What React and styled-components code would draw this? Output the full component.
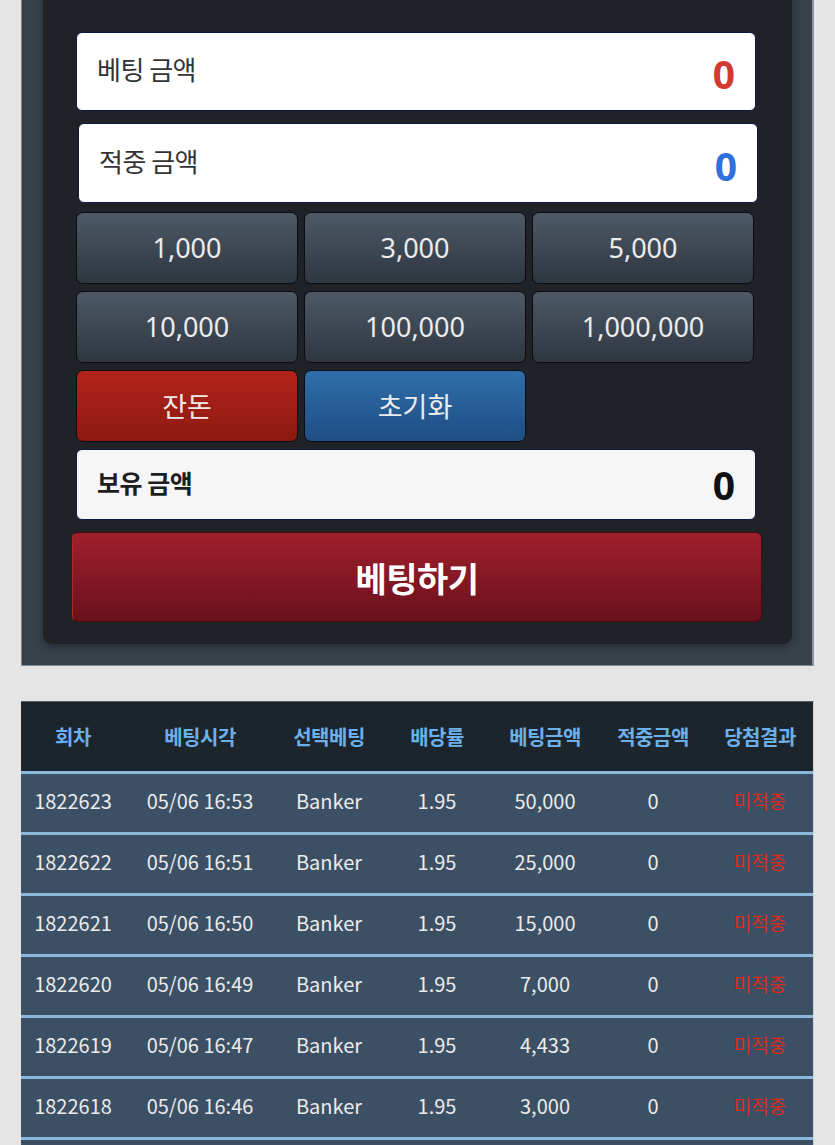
import React from "react";
import styled, { createGlobalStyle } from "styled-components";

const Global = createGlobalStyle`
  html, body {
    margin: 0;
    padding: 0;
    background: #e5e5e5;
    font-family: "Noto Sans CJK KR", "Noto Sans", sans-serif;
  }
  * { box-sizing: border-box; }
`;

const Page = styled.div`
  padding: 0 21px 40px;
  overflow: hidden;
`;

const Outer = styled.section`
  margin-top: -27px;
  background: #37414a;
  border: 1px solid #7f8a95;
  border-top: none;
  border-right: 2px solid #8a95a0;
  padding: 0 20px 21px 21px;
`;

const Inner = styled.div`
  background: #1f2327;
  border-radius: 9px;
  padding: 59px 36px 22px 33px;
  box-shadow: 0 3px 9px rgba(0, 0, 0, 0.35);
  display: flex;
  flex-direction: column;
`;

const Field = styled.div`
  height: ${(p) => p.$h}px;
  margin-top: ${(p) => p.$mt}px;
  margin-left: ${(p) => p.$shift || 0}px;
  margin-right: ${(p) => -(p.$shift || 0)}px;
  background: ${(p) => p.$bg || "#ffffff"};
  border: 1px solid #0c1848;
  border-radius: 6px;
  display: flex;
  align-items: center;
  justify-content: space-between;
  padding: 0 20px 0 20px;
`;

const Label = styled.span`
  font-size: ${(p) => (p.$bold ? 25 : 26)}px;
  font-weight: ${(p) => (p.$bold ? 700 : 400)};
  color: ${(p) => (p.$bold ? "#1e1e1e" : "#333333")};
  margin-bottom: ${(p) => p.$lift || 0}px;
  letter-spacing: -0.5px;
`;

const Value = styled.span`
  font-family: "Noto Sans", "Noto Sans CJK KR", sans-serif;
  font-size: 39px;
  font-weight: 700;
  color: ${(p) => p.$color};
  margin-top: ${(p) => p.$drop || 0}px;
`;

const Grid = styled.div`
  margin-top: 9px;
  display: grid;
  grid-template-columns: repeat(3, 1fr);
  grid-auto-rows: 72px;
  gap: 7px 6px;
  margin-right: 2px;
`;

const variants = {
  dark: { top: "#4d5967", bottom: "#2e363f" },
  red: { top: "#b3241b", bottom: "#8c1911" },
  blue: { top: "#2f6ea9", bottom: "#1f4d84" },
};

const ChipButton = styled.button`
  border: 1.5px solid #0b0d10;
  border-radius: 7px;
  background: linear-gradient(
    to bottom,
    ${(p) => variants[p.$variant].top},
    ${(p) => variants[p.$variant].bottom}
  );
  color: #ececec;
  font-family: "Noto Sans", "Noto Sans CJK KR", sans-serif;
  font-size: 27px;
  font-weight: 400;
  padding: 0 0 2px;
  cursor: pointer;
`;

const BetButton = styled.button`
  margin: 12px -6px 0 -4px;
  height: 90px;
  border: 1px solid #4e0a0f;
  border-left-color: #b0291f;
  border-radius: 6px;
  background: linear-gradient(to bottom, #a11f2d, #68111b);
  color: #ffffff;
  font-family: "Noto Sans CJK KR", sans-serif;
  font-size: 34px;
  font-weight: 700;
  letter-spacing: -0.5px;
  cursor: pointer;
`;

const TableWrap = styled.div`
  margin-top: 35px;
  border-top: 1px solid #5a5f66;
  border-right: 1px solid #cfd3d6;
  background: #3c5065;
  padding-bottom: 12px;
`;

const Table = styled.table`
  width: 100%;
  border-collapse: collapse;
  table-layout: fixed;
  font-family: "Noto Sans CJK KR", "Noto Sans", sans-serif;
  border-bottom: 3px solid #8cb8db;
`;

const HeadRow = styled.tr`
  background: #1c242c;
  height: 70px;
`;

const HeadCell = styled.th`
  color: #6cb0e9;
  font-size: 20px;
  font-weight: 700;
  text-align: center;
  padding: 0;
  letter-spacing: -0.5px;
`;

const Row = styled.tr`
  background: #3c5065;
  border-top: 3px solid #8cb8db;
  height: 61px;
`;

const Cell = styled.td`
  color: ${(p) => (p.$miss ? "#dc2a1e" : "#ebebeb")};
  font-size: ${(p) => (p.$miss ? 19 : 20)}px;
  font-weight: 400;
  text-align: center;
  padding: 0 0 5px;
  white-space: nowrap;
`;

const chips = ["1,000", "3,000", "5,000", "10,000", "100,000", "1,000,000"];

const cols = [104, 150, 108, 108, 108, 108, 106];
const heads = ["회차", "베팅시각", "선택베팅", "배당률", "베팅금액", "적중금액", "당첨결과"];

const rows = [
  ["1822623", "05/06 16:53", "Banker", "1.95", "50,000", "0"],
  ["1822622", "05/06 16:51", "Banker", "1.95", "25,000", "0"],
  ["1822621", "05/06 16:50", "Banker", "1.95", "15,000", "0"],
  ["1822620", "05/06 16:49", "Banker", "1.95", "7,000", "0"],
  ["1822619", "05/06 16:47", "Banker", "1.95", "4,433", "0"],
  ["1822618", "05/06 16:46", "Banker", "1.95", "3,000", "0"],
];

export default function App() {
  return (
    <>
      <Global />
      <Page>
        <Outer>
          <Inner>
            <Field $h={79} $mt={0}>
              <Label $lift={6}>베팅 금액</Label>
              <Value $color="#d33b31" $drop={4}>0</Value>
            </Field>
            <Field $h={80} $mt={12} $shift={2}>
              <Label $lift={6}>적중 금액</Label>
              <Value $color="#2f70dd" $drop={4}>0</Value>
            </Field>
            <Grid>
              {chips.map((c) => (
                <ChipButton key={c} $variant="dark">
                  {c}
                </ChipButton>
              ))}
              <ChipButton $variant="red">잔돈</ChipButton>
              <ChipButton $variant="blue">초기화</ChipButton>
            </Grid>
            <Field $h={71} $mt={7} $bg="#f6f6f6">
              <Label $bold $lift={6}>보유 금액</Label>
              <Value $color="#111111">0</Value>
            </Field>
            <BetButton>베팅하기</BetButton>
          </Inner>
        </Outer>
        <TableWrap>
          <Table>
            <colgroup>
              {cols.map((w, i) => (
                <col key={i} style={{ width: w }} />
              ))}
            </colgroup>
            <thead>
              <HeadRow>
                {heads.map((h) => (
                  <HeadCell key={h}>{h}</HeadCell>
                ))}
              </HeadRow>
            </thead>
            <tbody>
              {rows.map((r) => (
                <Row key={r[0]}>
                  {r.map((v, i) => (
                    <Cell key={i}>{v}</Cell>
                  ))}
                  <Cell $miss>미적중</Cell>
                </Row>
              ))}
            </tbody>
          </Table>
        </TableWrap>
      </Page>
    </>
  );
}
